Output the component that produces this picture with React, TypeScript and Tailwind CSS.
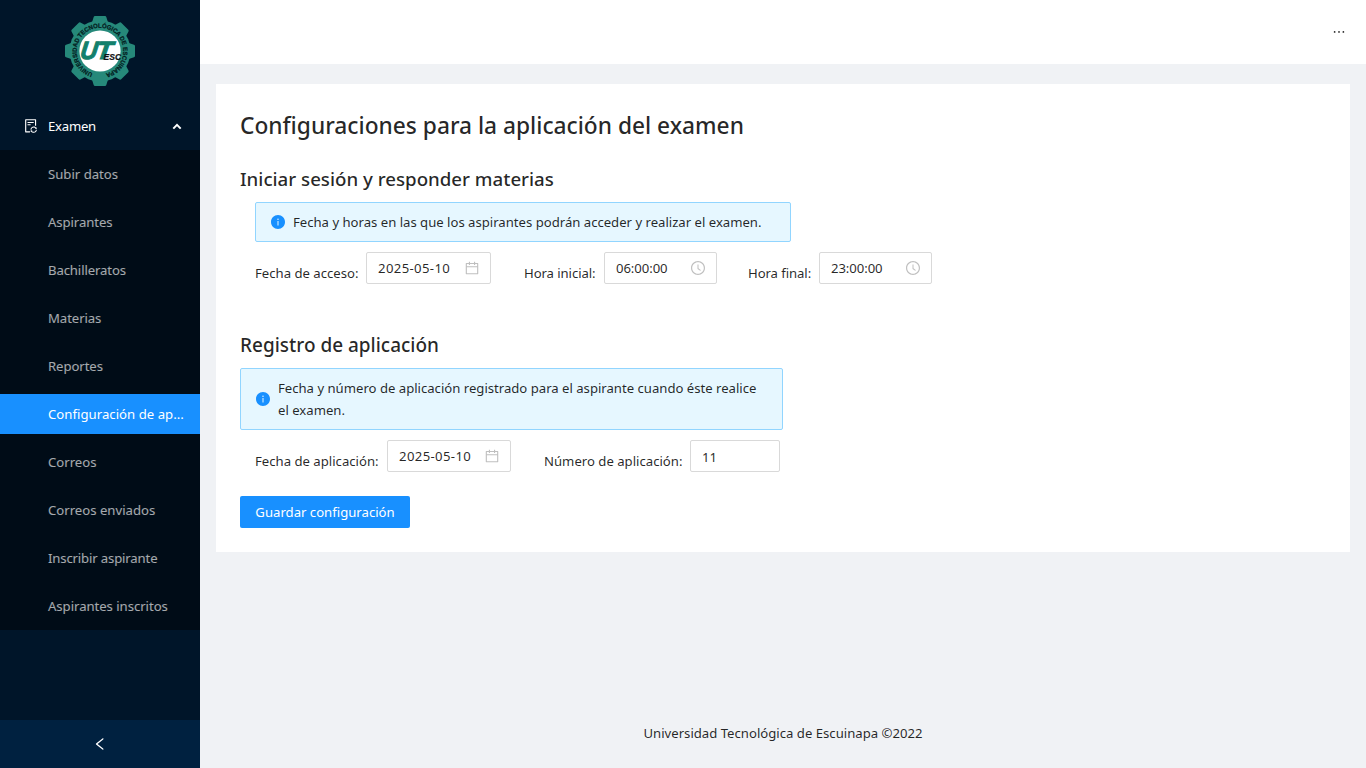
import type { ReactNode } from "react";
import {
  AiFillInfoCircle,
  AiOutlineCalendar,
  AiOutlineClockCircle,
  AiOutlineEllipsis,
  AiOutlineFileSync,
  AiOutlineLeft,
} from "react-icons/ai";

const menu = [
  { label: "Subir datos", cls: "" },
  { label: "Aspirantes", cls: "tracking-[-0.08px]" },
  { label: "Bachilleratos", cls: "tracking-[-0.12px]" },
  { label: "Materias", cls: "tracking-[-0.08px]" },
  { label: "Reportes", cls: "tracking-[-0.08px]" },
  { label: "Configuración de ap...", cls: "tracking-[0.03px]", active: true },
  { label: "Correos", cls: "" },
  { label: "Correos enviados", cls: "" },
  { label: "Inscribir aspirante", cls: "tracking-[-0.15px]" },
  { label: "Aspirantes inscritos", cls: "tracking-[-0.04px]" },
];

const teeth = [0, 45, 90, 135, 180, 225, 270, 315];

function Logo() {
  return (
    <svg className="size-[72px]" viewBox="-36 -36 72 72">
      <g fill="#26897a">
        <circle r="30.5" />
        {teeth.map((a) => (
          <path key={a} d="M-8.2 -28 L-6.3 -34 Q-6 -35 -5 -35 H5 Q6 -35 6.3 -34 L8.2 -28 Z" transform={`rotate(${a})`} />
        ))}
      </g>
      <circle r="20.6" fill="#fff" />
      <path id="ring" d="M-7.2 22.2 A23.3 23.3 0 1 1 7.2 22.2" fill="none" />
      <text fontFamily="Liberation Sans" fontWeight="700" fontSize="6.2" fill="#03201f" stroke="#03201f" strokeWidth="0.25" textLength="133" lengthAdjust="spacingAndGlyphs">
        <textPath href="#ring">UNIVERSIDAD TECNOLÓGICA DE ESCUINAPA</textPath>
      </text>
      <g fontFamily="Liberation Sans" fontWeight="700" fontStyle="italic">
        <g fill="#12806c" stroke="#12806c" strokeWidth="1.1" fontSize="25">
          <text transform="translate(-20.5 7.6) skewX(-8)" textLength="17" lengthAdjust="spacingAndGlyphs">U</text>
          <text transform="translate(-4.5 7.6) skewX(-8)" textLength="16" lengthAdjust="spacingAndGlyphs">T</text>
        </g>
        <text x="3.6" y="9" fontSize="8.4" fill="#111" stroke="#111" strokeWidth="0.2" textLength="17.5" lengthAdjust="spacingAndGlyphs">
          ESC
        </text>
      </g>
    </svg>
  );
}

function Alert({ children, className }: { children: ReactNode; className: string }) {
  return (
    <div className={`flex items-center rounded-xs border border-[#91d5ff] bg-[#e6f7ff] px-3.5 ${className}`}>
      <AiFillInfoCircle className="mr-[7px] size-4 shrink-0 text-[#1890ff]" />
      <div className="leading-[22px] tracking-[-0.01px] whitespace-nowrap">{children}</div>
    </div>
  );
}

function Field({ label, labelClass, boxClass, value, valueClass = "", icon }: {
  label: string;
  labelClass: string;
  boxClass: string;
  value: string;
  valueClass?: string;
  icon?: ReactNode;
}) {
  return (
    <div className="flex">
      <label className={`shrink-0 pt-[10px] leading-[22px] whitespace-nowrap ${labelClass}`}>{label}</label>
      <div className={`flex h-8 items-center justify-between rounded-xs border border-[#d9d9d9] bg-white pr-2.5 pl-[11px] ${boxClass}`}>
        <span className={valueClass}>{value}</span>
        {icon && <span className="text-base text-black/25">{icon}</span>}
      </div>
    </div>
  );
}

export default function App() {
  return (
    <div className="flex h-screen w-full overflow-hidden bg-[#f0f2f5] font-['Noto_Sans',sans-serif] text-[13.15px] leading-[22px] text-black/85">
      <aside className="flex w-[200px] shrink-0 flex-col bg-[#001529]">
        <div className="flex h-[102px] justify-center pt-[15px]">
          <Logo />
        </div>
        <div className="flex h-12 items-center pr-[18px] pl-[23px] text-white">
          <AiOutlineFileSync className="mr-[9px] size-4" />
          <span className="flex-1 tracking-[-0.25px]">Examen</span>
          <svg className="size-2.5" viewBox="0 0 10 10" fill="none" stroke="currentColor" strokeWidth="2">
            <path d="M1.3 7.6 L5 3.9 L8.7 7.6" />
          </svg>
        </div>
        <nav className="flex flex-col gap-2 bg-[#000c17] py-1">
          {menu.map((m) => (
            <div
              key={m.label}
              className={`flex h-10 items-center pl-12 whitespace-nowrap ${m.active ? "bg-[#1890ff] text-white" : "text-white/65"}`}
            >
              <span className={m.cls}>{m.label}</span>
            </div>
          ))}
        </nav>
        <div className="mt-auto flex h-12 items-center justify-center bg-[#002140] text-white">
          <AiOutlineLeft className="size-4" />
        </div>
      </aside>
      <div className="flex flex-1 flex-col">
        <header className="flex h-16 shrink-0 justify-end bg-white">
          <div className="flex w-[54px] items-center justify-center">
            <AiOutlineEllipsis className="size-4" />
          </div>
        </header>
        <main className="mx-4 mt-5 h-[468px] bg-white p-6">
          <h1 className="h-9 text-[22.74px] leading-9 font-medium">Configuraciones para la aplicación del examen</h1>
          <h2 className="mt-[21px] text-[18.7px] leading-7 font-medium">Iniciar sesión y responder materias</h2>
          <Alert className="mt-[9px] ml-[15px] h-10 w-[536px]">
            Fecha y horas en las que los aspirantes podrán acceder y realizar el examen.
          </Alert>
          <div className="mt-2.5 flex pl-[15px]">
            <Field label="Fecha de acceso:" labelClass="w-[111px]" boxClass="w-[125px]" value="2025-05-10" valueClass="tracking-[0.36px]" icon={<AiOutlineCalendar />} />
            <div className="w-[33px]" />
            <Field label="Hora inicial:" labelClass="w-20 tracking-[-0.08px]" boxClass="w-[113px]" value="06:00:00" valueClass="tracking-[-0.08px]" icon={<AiOutlineClockCircle />} />
            <div className="w-[31px]" />
            <Field label="Hora final:" labelClass="w-[71px] tracking-[-0.08px]" boxClass="w-[113px]" value="23:00:00" valueClass="tracking-[-0.08px]" icon={<AiOutlineClockCircle />} />
          </div>
          <h2 className="mt-[47px] text-[18.98px] leading-7 font-medium">Registro de aplicación</h2>
          <Alert className="mt-[9px] h-[62px] w-[543px]">
            Fecha y número de aplicación registrado para el aspirante cuando éste realice
            <br />
            el examen.
          </Alert>
          <div className="mt-2.5 flex pl-[15px]">
            <Field label="Fecha de aplicación:" labelClass="w-[132px]" boxClass="w-[124px]" value="2025-05-10" valueClass="tracking-[0.36px]" icon={<AiOutlineCalendar />} />
            <div className="w-[33px]" />
            <Field label="Número de aplicación:" labelClass="w-[146px]" boxClass="w-[90px]" value="11" valueClass="pt-0.5" />
          </div>
          <button className="mt-6 flex h-8 w-[170px] items-center justify-center rounded-xs bg-[#1890ff] text-white">
            Guardar configuración
          </button>
        </main>
        <footer className="mt-auto pb-6 text-center">Universidad Tecnológica de Escuinapa ©2022</footer>
      </div>
    </div>
  );
}
